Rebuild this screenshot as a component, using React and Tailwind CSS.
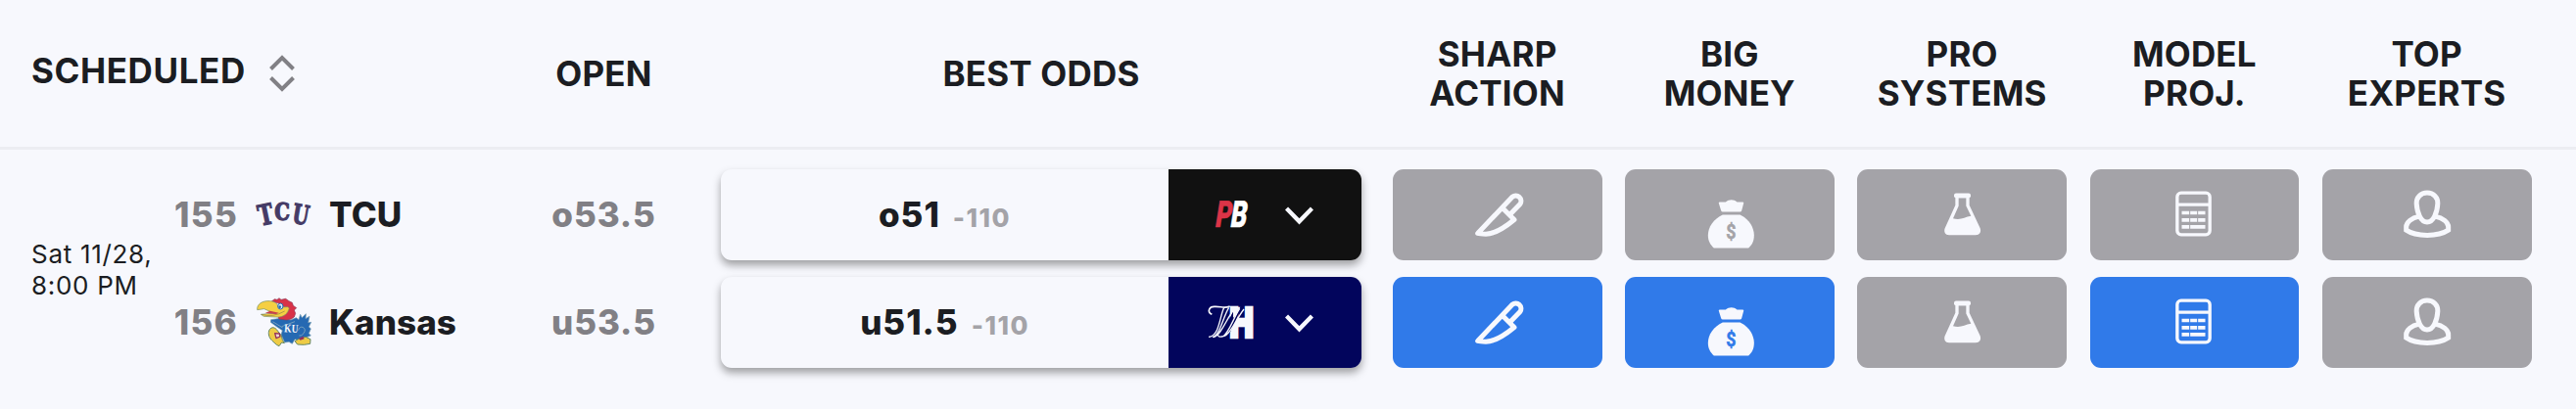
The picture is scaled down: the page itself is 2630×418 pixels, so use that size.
import React from "react";

const columns = [
  ["SHARP", "ACTION"],
  ["BIG", "MONEY"],
  ["PRO", "SYSTEMS"],
  ["MODEL", "PROJ."],
  ["TOP", "EXPERTS"],
];

function SortIcon() {
  return (
    <svg className="h-[38px] w-[26px]" viewBox="0 0 26 38" fill="none" stroke="#818085" strokeWidth="4">
      <path d="M1.5 14.500 13 3l11.500 11.500M1.500 23.500 13 35l11.500-11.500" />
    </svg>
  );
}

function TcuLogo() {
  return (
    <svg className="h-[28px] w-[56px] overflow-visible" viewBox="96 76 168 84" fill="#453b66" stroke="#453b66" strokeWidth="4" fontFamily="'DejaVu Serif', serif" fontWeight="700">
      <text transform="translate(107 153) rotate(-12) scale(.72 1)" fontSize="86">T</text>
      <text transform="translate(151 136) scale(.8 1)" fontSize="74">C</text>
      <text transform="translate(202 143) rotate(10) scale(.7 1)" fontSize="82">U</text>
    </svg>
  );
}

function KansasLogo() {
  return (
    <svg className="h-[51px] w-[56px] overflow-visible" viewBox="95 372 168 153" strokeLinejoin="round">
      <path d="M139 440 168 436 200 441 216 434 224 440 229 424 234 434 246 422 245 437 257 430 253 449 262 448 255 462 261 468 255 482 261 489 240 497 223 503 212 500 204 514 194 508 181 510 170 486 174 473 157 462 138 448Z" fill="#2569b2" stroke="#6f99ad" strokeWidth="2" />
      <path d="M141 384 150 377 158 379 164 374 170 379 184 376 194 383 204 388 207 397 217 404 210 411 214 421 210 432 201 438 187 441 164 438 160 430 180 420 184 405 166 391Z" fill="#d83248" stroke="#8b3858" strokeWidth="2" />
      <path d="M97 410C95 393 112 381 136 383 151 384 159 391 162 402L190 401C194 402 196 405 193 410 188 426 171 434 153 432L117 430 108 424 128 422 150 421 118 407Z" fill="#f5cf43" stroke="#71906a" strokeWidth="2" />
      <path d="m121 420 15-7 27 6-8 4Z" fill="#c8404b" />
      <path d="M110 424Q144 435 181 414" fill="none" stroke="#8b7f42" strokeWidth="2" />
      <ellipse cx="168" cy="399" rx="8" ry="9" fill="#d9edf3" stroke="#2569b2" strokeWidth="3" />
      <circle cx="166" cy="401" r="4" fill="#2569b2" />
      <path d="M133 474C137 463 148 461 156 470L171 489 174 502 180 512 172 510 164 521 156 517 143 505C133 496 130 484 133 474Z" fill="#eecb45" stroke="#668865" strokeWidth="3" />
      <path d="m151 482 14 1 2 9-12 5Z" fill="#f0d8d0" stroke="#94315a" strokeWidth="4" />
      <path d="m212 506 12-7 21-6 15 7-1 14-19 3-20-1Z" fill="#eecb45" stroke="#668865" strokeWidth="3" />
      <path d="m224 498 13-7 4 8-12 4Z" fill="#94315a" />
      <path d="m144 446 31 19M172 461l40-15M223 473q2-12 13-10 12 6 3 19-6 9-14 7" fill="none" stroke="#84a9bf" strokeWidth="2.500" />
      <text transform="translate(179 478) rotate(3) scale(.78 1)" fill="#f7f8fd" fontFamily="'Liberation Serif', serif" fontWeight="700" fontSize="36">KU</text>
    </svg>
  );
}

function PointsBetLogo() {
  return (
    <svg className="size-12 overflow-visible" viewBox="189 106 144 144" fontFamily="Roboto, sans-serif" fontWeight="900" fontSize="113" strokeWidth="2">
      <text transform="translate(209 217) skewX(-9) scale(.68 1)" fill="#dc3447" stroke="#dc3447">P</text>
      <text transform="translate(256 217) skewX(-9) scale(.68 1)" fill="#fff" stroke="#fff">B</text>
    </svg>
  );
}

function WilliamHillLogo() {
  return (
    <svg className="size-12 overflow-visible" viewBox="189 436 144 144" fill="none">
      <text transform="translate(256 556) scale(.86 1)" fill="#f7f8fd" stroke="#f7f8fd" strokeWidth="8" fontFamily="Inter, sans-serif" fontWeight="900" fontSize="129" textLength="87" lengthAdjust="spacingAndGlyphs">H</text>
      <path d="m229 556 43-92 22 0-44 92Z" fill="#02055c" />
      <path d="M202 485C186 477 193 460 211 461 229 460 240 468 257 460" stroke="#f7f8fd" strokeWidth="5" />
      <path d="M239 465C226 488 225 553 192 554M254 464C236 492 226 551 204 555" stroke="#f7f8fd" strokeWidth="4" />
      <path d="M207 555C232 548 248 492 275 463M220 545Q219 557 237 552C255 539 268 496 287 467M239 552C260 545 275 501 300 469" stroke="#f7f8fd" strokeWidth="4" />
      <path d="m267 463 22-1-14 28-8 5Z" fill="#f7f8fd" />
    </svg>
  );
}

function Chevron() {
  return (
    <svg className="size-[29px]" viewBox="424.500 134 87 87" fill="none" stroke="#f7f8fd" strokeWidth="13">
      <path d="m429 158 39 40 39-40" />
    </svg>
  );
}

function KnifeIcon() {
  return (
    <svg className="size-[60px]" viewBox="293 88.500 180 180" fill="none" stroke="#f7f8fd" strokeWidth="15" strokeLinejoin="round">
      <path d="M322 237 428 125A16.500 16.500 0 0 1 452 147L420 180M397 158 434 195C400 223 370 239 347 239 336 239 328 239 322 237Z" />
    </svg>
  );
}

function MoneyIcon() {
  return (
    <svg className="size-[60px] overflow-visible" viewBox="1005.500 88.500 180 180" fill="#f7f8fd">
      <path d="M1065 141H1083C1093 132 1108 132 1118 141H1135Q1139 141 1138 145L1132 167Q1131 171 1127 171H1074Q1070 171 1069 167L1062 145Q1061 141 1065 141Z" />
      <path d="M1074 180H1127C1154 193 1170 218 1170 243 1170 261 1163 273 1153 282H1047C1036 272 1029 260 1029 243 1029 218 1046 193 1074 180Z" />
      <text transform="translate(1100 253) scale(.86 1)" textAnchor="middle" fill="currentColor" stroke="currentColor" strokeWidth="1.500" fontFamily="Roboto, sans-serif" fontWeight="700" fontSize="62">$</text>
    </svg>
  );
}

function FlaskIcon() {
  return (
    <svg className="size-[60px]" viewBox="279 88.500 180 180" fill="#f7f8fd">
      <rect x="345" y="114" width="51" height="14" rx="6" />
      <path fillRule="evenodd" d="M349 124H392V151L425 221C429 233 423 242 411 242H330C318 242 313 232 317 221L349 151ZM359 128V153L342 191Q358 196 376 190 386 186 397 184L382 153V128Z" />
    </svg>
  );
}

function ModelIcon() {
  return (
    <svg className="size-[60px]" viewBox="-57.500 88.500 180 180" fill="none" stroke="#f7f8fd">
      <rect x="-19" y="113" width="100" height="128" rx="12" strokeWidth="10" />
      <path d="M-19 149H81" strokeWidth="10" />
      <path d="M-5 174H18M21 174H42M45 174H67M-5 196H18M21 196H42M45 196H67M-5 217H18M21 217H67" strokeWidth="11" />
    </svg>
  );
}

function ExpertIcon() {
  return (
    <svg className="size-[60px]" viewBox="653 88.500 180 180" fill="none" stroke="#f7f8fd" strokeWidth="15">
      <path d="M743 112.500C763 112.500 776 127 775.500 145 774 174 762 202.500 743 202.500S712 174 710.500 145C710 127 723 112.500 743 112.500Z" />
      <path d="M719 185C695 190 679 203 679 217V227C709 248 777 248 808 227V217C808 203 792 190 767 185" />
    </svg>
  );
}

const icons = [KnifeIcon, MoneyIcon, FlaskIcon, ModelIcon, ExpertIcon];

const rows = [
  { id: "155", team: "TCU", open: "o53.5", odds: "o51", Logo: TcuLogo, Book: PointsBetLogo, book: "bg-[#111111]", active: [false, false, false, false, false] },
  { id: "156", team: "Kansas", open: "u53.5", odds: "u51.5", Logo: KansasLogo, Book: WilliamHillLogo, book: "bg-[#02055c]", active: [true, true, false, true, false] },
];

export default function App() {
  return (
    <div className="h-[418px] w-[2630px] overflow-hidden bg-[#f7f8fd] font-['Inter',sans-serif] text-[#1b1d22]">
      <header className="grid h-[153px] grid-cols-[520px_193px_697px_repeat(5,237.25px)] items-center border-b-[3px] border-[#ecedf2] text-[35px] leading-10 font-bold tracking-[0.2px]">
        <div className="flex items-center gap-[24px] pl-8">
          <span className="-mt-[6px] tracking-[0.6px]">SCHEDULED</span>
          <SortIcon />
        </div>
        <div className="text-center">OPEN</div>
        <div className="pr-5 pl-[23px] text-center">BEST ODDS</div>
        {columns.map(([top, bottom]) => (
          <div key={bottom} className="text-center">
            <div>{top}</div>
            <div>{bottom}</div>
          </div>
        ))}
      </header>

      <main className="flex pt-5">
        <div className="flex w-[160px] items-center pt-[3px] pl-8 text-[26px] leading-8 tracking-[0.700px] whitespace-nowrap">
          <div>
            Sat 11/28,
            <br />
            8:00 PM
          </div>
        </div>
        <div className="flex flex-col gap-[17.500px]">
          {rows.map(({ id, team, open, odds, Logo, Book, book, active }) => (
            <div key={id} className="grid h-[92.500px] grid-cols-[360px_193px_697px_repeat(5,237.25px)] items-center text-[35px] font-extrabold tracking-[1px]">
              <div className="flex items-center">
                <span className="w-[83px] text-right tracking-[1.300px] whitespace-nowrap text-[#818085]">{id}</span>
                <span className="ml-[19px] flex w-14 items-center">
                  <Logo />
                </span>
                <span className="ml-[18px] tracking-[0.1px]">{team}</span>
              </div>
              <div className="text-center tracking-[0.900px] text-[#818085]">{open}</div>
              <div className="h-full pr-5 pl-[23px]">
                <div className="flex h-full overflow-hidden rounded-[11px] shadow-[0_5px_9px_rgba(0,0,0,0.36)]">
                  <div className="flex flex-1 items-baseline justify-center gap-[13px] pt-[20px]">
                    <span>{odds}</span>
                    <span className="text-[26px] font-extrabold tracking-[1.500px] text-[#a4a3a8]">-110</span>
                  </div>
                  <div className={`flex w-[197px] items-center gap-[31px] pl-10 ${book}`}>
                    <Book />
                    <Chevron />
                  </div>
                </div>
              </div>
              {icons.map((Icon, i) => (
                <div key={i} className="h-full px-[11.750px]">
                  <div className={`flex h-full items-center justify-center rounded-[11px] ${active[i] ? "bg-[#307ae9] text-[#307ae9]" : "bg-[#a4a3a8] text-[#a4a3a8]"}`}>
                    <Icon />
                  </div>
                </div>
              ))}
            </div>
          ))}
        </div>
      </main>
    </div>
  );
}
